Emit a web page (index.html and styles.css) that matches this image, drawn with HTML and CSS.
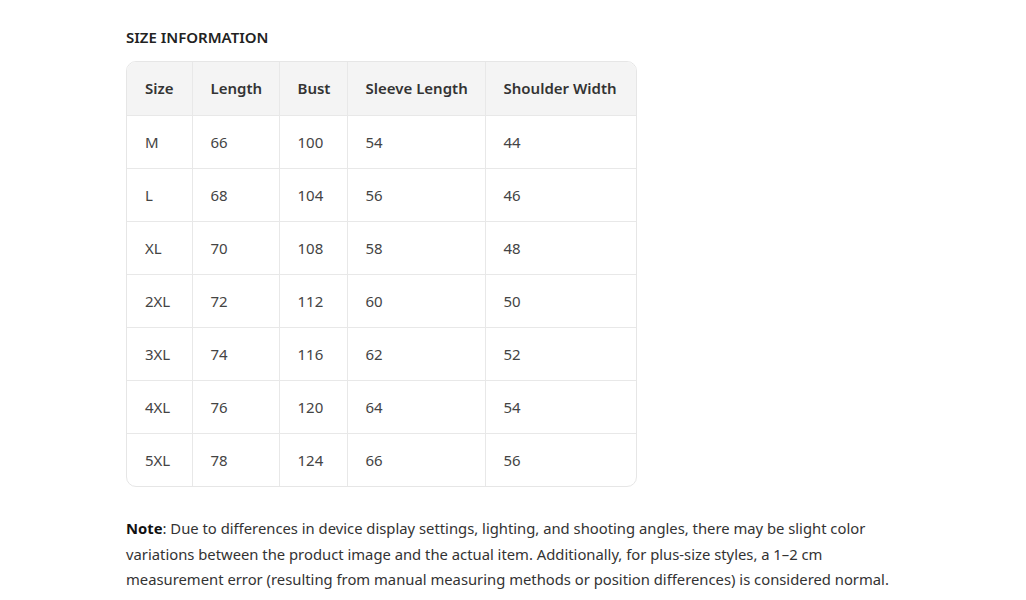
FILE: index.html
```html
<!DOCTYPE html>
<html>
<head>
<meta charset="utf-8">
<link rel="stylesheet" href="styles.css">
</head>
<body>
<div class="page">
  <h2 class="title">SIZE INFORMATION</h2>
  <div class="table-wrap">
    <table class="size-table">
      <colgroup>
        <col class="c1"><col class="c2"><col class="c3"><col class="c4"><col class="c5">
      </colgroup>
      <thead>
        <tr><th>Size</th><th>Length</th><th>Bust</th><th>Sleeve Length</th><th>Shoulder Width</th></tr>
      </thead>
      <tbody>
        <tr><td>M</td><td>66</td><td>100</td><td>54</td><td>44</td></tr>
        <tr><td>L</td><td>68</td><td>104</td><td>56</td><td>46</td></tr>
        <tr><td>XL</td><td>70</td><td>108</td><td>58</td><td>48</td></tr>
        <tr><td>2XL</td><td>72</td><td>112</td><td>60</td><td>50</td></tr>
        <tr><td>3XL</td><td>74</td><td>116</td><td>62</td><td>52</td></tr>
        <tr><td>4XL</td><td>76</td><td>120</td><td>64</td><td>54</td></tr>
        <tr><td>5XL</td><td>78</td><td>124</td><td>66</td><td>56</td></tr>
      </tbody>
    </table>
  </div>
  <p class="note"><strong>Note</strong>: Due to differences in device display settings, lighting, and shooting angles, there may be slight color variations between the product image and the actual item. Additionally, for plus-size styles, a 1–2 cm measurement error (resulting from manual measuring methods or position differences) is considered normal.</p>
</div>
</body>
</html>
```
FILE: styles.css
```css
* { box-sizing: border-box; }
html, body { margin: 0; padding: 0; background: #fff; }
body {
  font-family: "Noto Sans", "Open Sans", sans-serif;
  color: #333;
}
.page {
  padding: 27px 0 0 126px;
  width: 900px;
}
.title {
  margin: 0 0 14px;
  font-size: 15px;
  font-weight: 600;
  color: #222;
  line-height: 20px;
}
.table-wrap {
  width: 511px;
  border: 1px solid #e6e6e6;
  border-radius: 10px;
  overflow: hidden;
}
.size-table {
  width: 100%;
  border-collapse: collapse;
  table-layout: fixed;
  font-size: 15px;
}
.c1 { width: 65px; }
.c2 { width: 87px; }
.c3 { width: 68px; }
.c4 { width: 138px; }
.c5 { width: 151px; }
.size-table th,
.size-table td {
  text-align: left;
  padding: 0 0 0 18px;
  border-left: 1px solid #e8e8e8;
  border-top: 1px solid #e8e8e8;
  white-space: nowrap;
}
.size-table th:first-child,
.size-table td:first-child { border-left: none; }
.size-table thead th {
  border-top: none;
  height: 53px;
  background: #f4f4f4;
  font-weight: 600;
  color: #333;
}
.size-table td {
  height: 53px;
  color: #444;
  font-weight: 400;
}
.note {
  margin: 29px 0 0;
  width: 775px;
  font-size: 14.8px;
  line-height: 25.5px;
  color: #333;
}
.note strong { color: #111; font-weight: 700; }
```
